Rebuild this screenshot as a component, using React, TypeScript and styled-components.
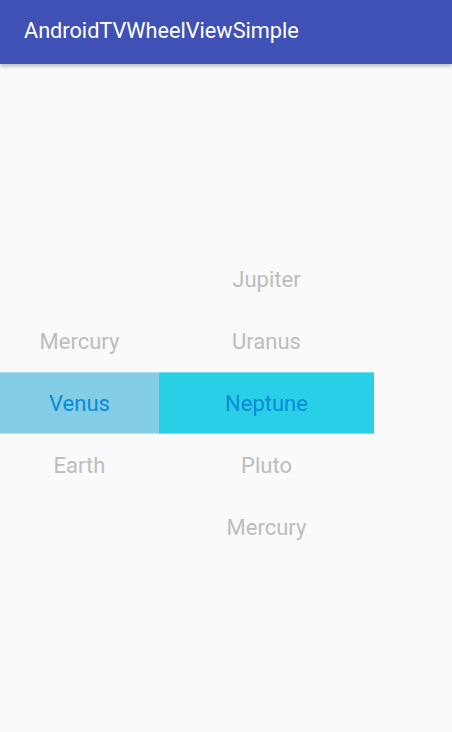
import React from "react";
import styled, { createGlobalStyle } from "styled-components";

const Global = createGlobalStyle`
  html, body { margin: 0; padding: 0; background: #fafafa; }
  body { font-family: Roboto, "Noto Sans", sans-serif; }
`;

const Screen = styled.div`
  width: 452px;
  height: 732px;
  background: #fafafa;
  display: flex;
  flex-direction: column;
  overflow: hidden;
`;

const Toolbar = styled.header`
  height: 64px;
  flex: none;
  background: #3f51b5;
  display: flex;
  align-items: center;
  padding-left: 24px;
  padding-bottom: 4px;
  box-sizing: border-box;
  box-shadow: 0 2px 4px rgba(0, 0, 0, 0.28);
  position: relative;
  z-index: 1;
`;

const Title = styled.h1`
  margin: 0;
  font-family: Roboto, sans-serif;
  font-weight: 400;
  font-size: 21.7px;
  color: #ffffff;
  letter-spacing: 0;
`;

const Wheels = styled.div`
  display: flex;
  margin-top: 184px;
`;

const Column = styled.div<{ $w: number }>`
  width: ${(p) => p.$w}px;
  display: flex;
  flex-direction: column;
`;

const Item = styled.div<{ $sel?: boolean; $bg?: string }>`
  height: 62px;
  display: flex;
  align-items: center;
  justify-content: center;
  font-family: Roboto, sans-serif;
  font-size: 22px;
  color: ${(p) => (p.$sel ? "#0a8bd6" : "#bdbdbd")};
  background: ${(p) => (p.$sel ? p.$bg : "transparent")};
  box-sizing: border-box;
  ${(p) =>
    p.$sel
      ? `border-top: 1px solid rgba(255,255,255,0.35); border-bottom: 1px solid rgba(255,255,255,0.35);`
      : ""}
`;

type Col = { width: number; bg: string; items: string[]; sel: number };

const columns: Col[] = [
  { width: 159, bg: "#83cde6", items: ["", "Mercury", "Venus", "Earth", ""], sel: 2 },
  { width: 215, bg: "#29cfe7", items: ["Jupiter", "Uranus", "Neptune", "Pluto", "Mercury"], sel: 2 },
];

export default function App() {
  return (
    <Screen>
      <Global />
      <Toolbar>
        <Title>AndroidTVWheelViewSimple</Title>
      </Toolbar>
      <Wheels>
        {columns.map((c, ci) => (
          <Column key={ci} $w={c.width}>
            {c.items.map((t, i) => (
              <Item key={i} $sel={i === c.sel} $bg={c.bg}>
                {t}
              </Item>
            ))}
          </Column>
        ))}
      </Wheels>
    </Screen>
  );
}
